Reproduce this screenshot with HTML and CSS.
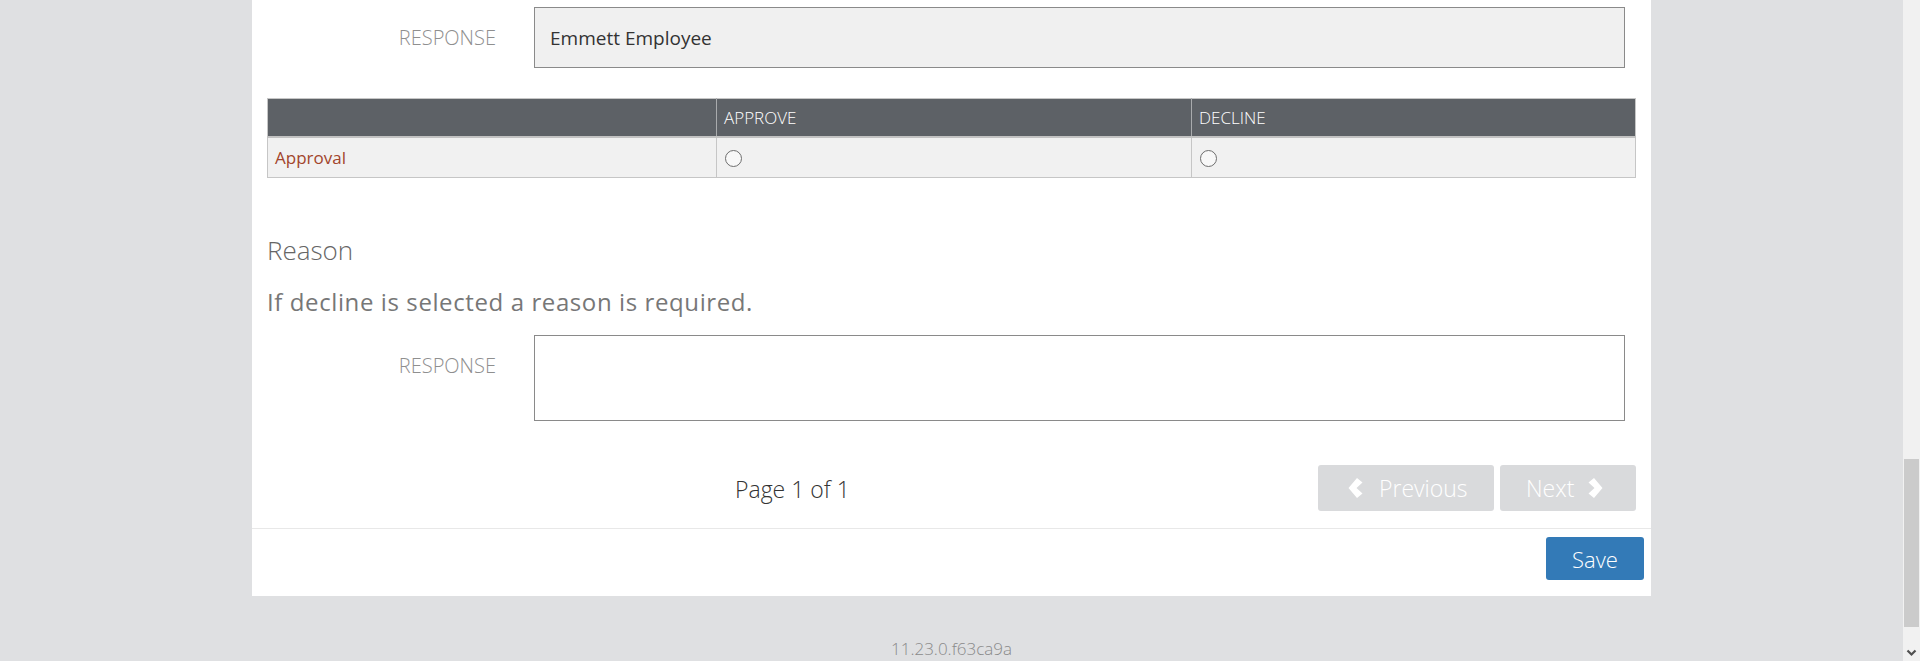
FILE: index.html
```html
<!DOCTYPE html>
<html lang="en">
<head>
<meta charset="utf-8">
<title>Approval form</title>
<link rel="stylesheet" href="styles.css">
</head>
<body>
<div class="viewport">
  <main class="page">
    <section class="card">
      <div class="card-body">
        <div class="form-row">
          <label class="form-label">RESPONSE</label>
          <div class="input readonly">Emmett Employee</div>
        </div>

        <table class="matrix">
          <colgroup>
            <col class="c1"><col class="c2"><col class="c3">
          </colgroup>
          <thead>
            <tr><th></th><th>APPROVE</th><th>DECLINE</th></tr>
          </thead>
          <tbody>
            <tr>
              <td class="q">Approval</td>
              <td><input type="radio" name="approval" class="radio"></td>
              <td><input type="radio" name="approval" class="radio"></td>
            </tr>
          </tbody>
        </table>

        <h3 class="section-title">Reason</h3>
        <p class="section-text">If decline is selected a reason is required.</p>

        <div class="form-row">
          <label class="form-label">RESPONSE</label>
          <div class="input textarea"></div>
        </div>

        <div class="pager">
          <span class="page-count">Page 1 of 1</span>
          <div class="pager-buttons">
            <button class="pg-btn prev" type="button">
              <svg class="chev" width="15" height="20" viewBox="0 0 15 20"><polygon points="9,0 14.5,4.5 8.5,10 14.5,15.5 9,20 0.5,10" fill="#ffffff"/></svg>
              <span>Previous</span>
            </button>
            <button class="pg-btn next" type="button">
              <span>Next</span>
              <svg class="chev" width="15" height="20" viewBox="0 0 15 20"><polygon points="6,0 0.5,4.5 6.5,10 0.5,15.5 6,20 14.5,10" fill="#ffffff"/></svg>
            </button>
          </div>
        </div>
      </div>
      <div class="card-footer">
        <button class="save-btn" type="button">Save</button>
      </div>
    </section>
    <div class="version">11.23.0.f63ca9a</div>
  </main>
  <div class="scrollbar">
    <div class="track"></div>
    <div class="thumb"></div>
    <div class="arrow">
      <svg width="17" height="17" viewBox="0 0 17 17"><polyline points="4.5,6.5 8.5,10.5 12.5,6.5" fill="none" stroke="#505050" stroke-width="2.2"/></svg>
    </div>
  </div>
</div>
</body>
</html>
```
FILE: styles.css
```css
* { box-sizing: border-box; }
html, body {
  margin: 0;
  padding: 0;
  height: 100%;
  overflow: hidden;
}
body {
  background: #dfe0e2;
  font-family: "Open Sans", "Liberation Sans", sans-serif;
  color: #333;
}
.viewport {
  display: flex;
  height: 661px;
}
.page {
  flex: 1;
  display: flex;
  flex-direction: column;
  align-items: center;
}
.card {
  width: 1399px;
  background: #ffffff;
}
.card-body {
  padding: 7px 15px 0 15px;
}
.form-row {
  display: grid;
  grid-template-columns: 229px 1fr;
  column-gap: 38px;
  padding-right: 11px;
}
.form-label {
  text-align: right;
  font-weight: 300;
  font-size: 20px;
  line-height: 26px;
  padding-top: 18px;
  color: #8f8f8f;
}
.input {
  border: 1px solid #8a8a8a;
  font-size: 19px;
  color: #333;
}
.input.readonly {
  height: 61px;
  background: #f0f0f0;
  padding: 15px 15px 14px 15px;
  line-height: 30px;
}
.input.textarea {
  height: 86px;
  background: #ffffff;
}
.matrix {
  width: 100%;
  margin-top: 30px;
  border-collapse: collapse;
  table-layout: fixed;
  border: 1px solid #c6c6c6;
}
.c1 { width: 449px; }
.c2 { width: 475px; }
.c3 { width: auto; }
.matrix th {
  background: #5d6166;
  color: #ffffff;
  font-weight: 300;
  font-size: 17px;
  text-align: left;
  padding: 8px 7px;
  line-height: 21px;
  border-left: 1px solid #a9abad;
  border-bottom: 2px solid #c2c2c2;
}
.matrix th:first-child { border-left: none; }
.matrix td {
  background: #f1f1f1;
  padding: 9px 7px;
  line-height: 21px;
  height: 40px;
  border-left: 1px solid #c6c6c6;
  vertical-align: middle;
}
.matrix td.q {
  color: #a2452c;
  font-size: 17px;
  border-left: none;
}
.radio {
  appearance: none;
  -webkit-appearance: none;
  display: block;
  width: 17px;
  height: 17px;
  margin: 2px 0 0 1px;
  border: 1px solid #6e6e6e;
  border-radius: 50%;
  background: #f8f8f8;
}
.section-title {
  margin: 55px 0 0 0;
  font-weight: 300;
  font-size: 26px;
  line-height: 34px;
  color: #666;
}
.section-text {
  margin: 19px 0 0 0;
  font-size: 24px;
  line-height: 31px;
  color: #777;
  letter-spacing: 0.6px;
}
.section-text + .form-row { margin-top: 18px; }
.pager {
  display: flex;
  align-items: center;
  margin-top: 44px;
  margin-bottom: 17px;
}
.page-count {
  margin-left: 468px;
  font-weight: 300;
  font-size: 23px;
  color: #333;
  padding-top: 2px;
}
.pager-buttons {
  margin-left: auto;
  display: flex;
  gap: 6px;
}
.pg-btn {
  display: flex;
  align-items: center;
  gap: 16px;
  height: 46px;
  border: none;
  border-radius: 3px;
  background: #d9dadc;
  color: #ffffff;
  font-family: inherit;
  font-weight: 300;
  font-size: 23px;
}
.pg-btn.prev { width: 176px; padding: 0 0 0 30px; }
.pg-btn.next { width: 136px; padding: 0 0 0 26px; gap: 14px; }
.chev { display: block; }
.card-footer {
  border-top: 1px solid #e8e8e8;
  padding: 8px 7px 16px 7px;
  display: flex;
  justify-content: flex-end;
}
.save-btn {
  width: 98px;
  height: 43px;
  border: none;
  border-radius: 3px;
  background: #337ab7;
  color: #ffffff;
  font-family: inherit;
  font-weight: 300;
  font-size: 22px;
  padding: 0;
}
.version {
  margin-top: 41px;
  font-weight: 300;
  font-size: 17px;
  line-height: 24px;
  color: #8a8a8a;
}
.scrollbar {
  width: 17px;
  display: flex;
  flex-direction: column;
  background: #f1f1f1;
}
.track { height: 459px; }
.thumb {
  height: 168px;
  margin: 0 1px;
  background: #cbcbcb;
}
.arrow {
  margin-top: auto;
  height: 17px;
}
.arrow svg { display: block; }
```
